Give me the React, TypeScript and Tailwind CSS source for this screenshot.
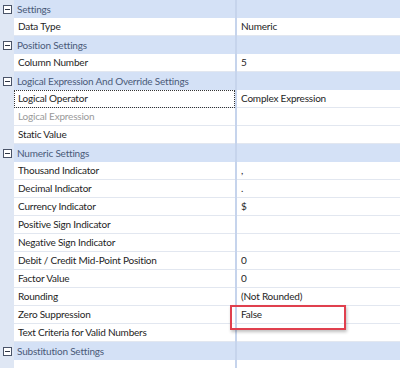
import React from "react";

type Row =
  | { kind: "header"; label: string }
  | { kind: "prop"; label: string; value?: string; disabled?: boolean; focused?: boolean; marked?: boolean };

const rows: Row[] = [
  { kind: "header", label: "Settings" },
  { kind: "prop", label: "Data Type", value: "Numeric" },
  { kind: "header", label: "Position Settings" },
  { kind: "prop", label: "Column Number", value: "5" },
  { kind: "header", label: "Logical Expression And Override Settings" },
  { kind: "prop", label: "Logical Operator", value: "Complex Expression", focused: true },
  { kind: "prop", label: "Logical Expression", disabled: true },
  { kind: "prop", label: "Static Value" },
  { kind: "header", label: "Numeric Settings" },
  { kind: "prop", label: "Thousand Indicator", value: "," },
  { kind: "prop", label: "Decimal Indicator", value: "." },
  { kind: "prop", label: "Currency Indicator", value: "$" },
  { kind: "prop", label: "Positive Sign Indicator" },
  { kind: "prop", label: "Negative Sign Indicator" },
  { kind: "prop", label: "Debit / Credit Mid-Point Position", value: "0" },
  { kind: "prop", label: "Factor Value", value: "0" },
  { kind: "prop", label: "Rounding", value: "(Not Rounded)" },
  { kind: "prop", label: "Zero Suppression", value: "False", marked: true },
  { kind: "prop", label: "Text Criteria for Valid Numbers" },
  { kind: "header", label: "Substitution Settings" },
  { kind: "prop", label: "" },
];

const MinusBox: React.FC = () => (
  <svg width="9" height="9" viewBox="0 0 9 9" className="block">
    <rect x="0.5" y="0.5" width="8" height="8" fill="#ffffff" stroke="#4a5468" />
    <line x1="2" y1="4.5" x2="7" y2="4.5" stroke="#2f3645" />
  </svg>
);

const PropertyGrid: React.FC = () => {
  return (
    <div
      className="w-[400px] h-[368px] overflow-hidden bg-[#dfe7f4] text-[10px] tracking-[-0.2px] text-[#1e1e1e]"
      style={{ fontFamily: 'Lato, "Noto Sans", sans-serif' }}
    >
      {rows.map((row, i) =>
        row.kind === "header" ? (
          <div key={i} className="flex h-[18px] bg-[#d4e1f6]">
            <div className="w-[14px] shrink-0 flex items-center justify-center bg-[#dfe7f4]">
              <MinusBox />
            </div>
            <div className="w-[221px] shrink-0 pl-[3px] leading-[18px] text-[#4a5a78] whitespace-nowrap">
              {row.label}
            </div>
            <div className="w-[2px] shrink-0 bg-[#c6d4ec]" />
            <div className="flex-1" />
          </div>
        ) : (
          <div key={i} className="flex h-[18px]">
            <div className="w-[14px] shrink-0 bg-[#dfe7f4]" />
            <div
              className={`w-[221px] shrink-0 bg-white border-b border-[#e2e7f0] pl-[4px] leading-[17px] whitespace-nowrap ${
                row.focused ? "outline-1 outline-dotted outline-[#333] -outline-offset-1" : ""
              } ${row.disabled ? "text-[#9a9a9a]" : ""}`}
            >
              {row.label}
            </div>
            <div className="w-[2px] shrink-0 bg-[#c6d4ec]" />
            <div className="relative flex-1 bg-white border-b border-[#e2e7f0] pl-[4px] leading-[17px] whitespace-nowrap">
              {row.value}
              {row.marked && (
                <div className="absolute z-10 left-[-7px] top-[-1px] w-[116px] h-[25px] border-2 border-[#e0404e] shadow-[1px_2px_3px_rgba(0,0,0,0.25)]" />
              )}
            </div>
          </div>
        )
      )}
    </div>
  );
};

export default function App() {
  return <PropertyGrid />;
}
